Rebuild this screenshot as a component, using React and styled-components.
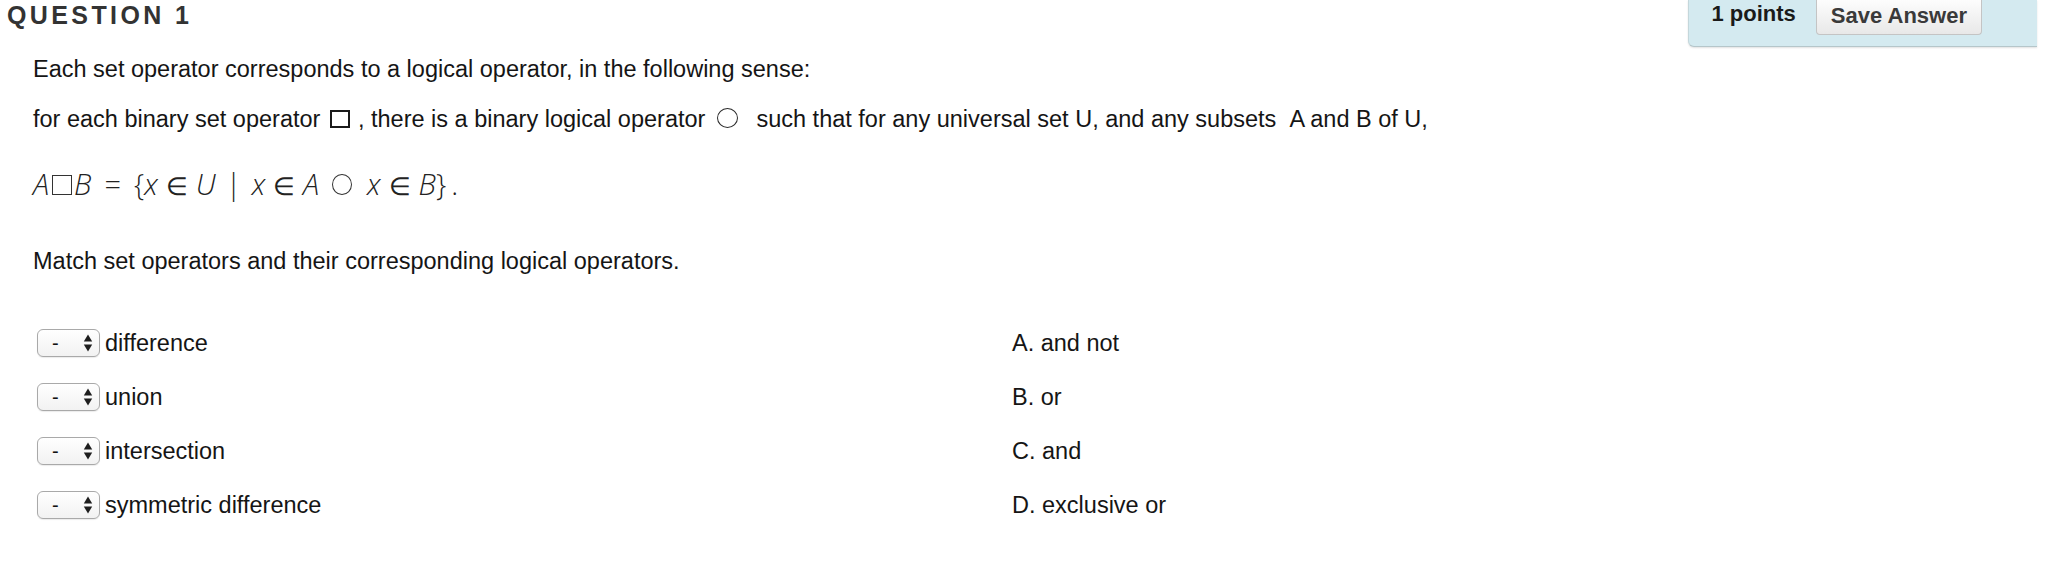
import React from "react";
import styled, { createGlobalStyle } from "styled-components";

const GlobalStyle = createGlobalStyle`
  html, body {
    margin: 0;
    padding: 0;
    background: #ffffff;
  }
  body {
    font-family: "Liberation Sans", Arial, Helvetica, sans-serif;
    color: #151515;
  }
`;

const Page = styled.div`
  width: 2046px;
  min-height: 566px;
  box-sizing: border-box;
`;

const Header = styled.header`
  display: flex;
  justify-content: space-between;
  align-items: flex-start;
`;

const Title = styled.h2`
  margin: 0;
  padding: 1px 0 0 7px;
  font-size: 25px;
  line-height: 28px;
  font-weight: 700;
  letter-spacing: 3.4px;
  color: #333333;
`;

const PointsBox = styled.div`
  display: flex;
  align-items: flex-start;
  height: 47px;
  box-sizing: border-box;
  margin-right: 9px;
  padding: 0 55px 0 23px;
  background: #d4eaf0;
  border-left: 1px solid #c4d7db;
  border-bottom: 1px solid #b5c6ca;
  border-bottom-left-radius: 6px;
  box-shadow: 0 1px 2px rgba(0, 0, 0, 0.12);
`;

const Points = styled.span`
  font-size: 22px;
  line-height: 26px;
  margin-top: 1px;
  font-weight: 700;
  color: #1a1a1a;
`;

const SaveButton = styled.button`
  margin-left: 20px;
  height: 35px;
  box-sizing: border-box;
  padding: 0 14px 3px;
  border: 1px solid #c4c4c4;
  border-top: none;
  border-radius: 0 0 4px 4px;
  background: linear-gradient(#fdfdfd, #e8e8e8);
  font-family: "Liberation Sans", Arial, sans-serif;
  font-size: 22px;
  line-height: 31px;
  font-weight: 700;
  color: #3a3a3a;
  cursor: pointer;
`;

const Content = styled.main`
  padding-left: 33px;
  margin-top: 8px;
`;

const Para = styled.p`
  margin: ${(p) => p.$top || 0}px 0 0 0;
  font-size: 23.5px;
  line-height: 28px;
  color: #151515;
  white-space: nowrap;
`;

const OpShape = styled.span`
  display: inline-block;
  box-sizing: border-box;
  width: ${(p) => p.$w}px;
  height: ${(p) => p.$h}px;
  margin: 0 ${(p) => p.$mr ?? 3}px 0 ${(p) => p.$ml ?? 3}px;
  border: ${(p) => p.$stroke}px solid ${(p) => p.$color || "#1a1a1a"};
  border-radius: ${(p) => (p.$shape === "circle" ? "50%" : "0")};
  vertical-align: ${(p) => p.$va ?? -1}px;
`;

const Formula = styled.div`
  margin-top: 31px;
  font-family: "Open Sans", "DejaVu Sans", sans-serif;
  font-weight: 300;
  font-size: 29px;
  line-height: 40px;
  color: #222222;
  white-space: nowrap;
`;

const Var = styled.i`
  font-style: italic;
  font-weight: 300;
`;

const Rel = styled.span`
  display: inline-block;
  margin: 0 ${(p) => p.$space ?? 0.3}em;
  font-family: ${(p) => (p.$sym ? '"DejaVu Sans", sans-serif' : '"Open Sans", sans-serif')};
  font-weight: ${(p) => (p.$sym ? 200 : 300)};
  font-size: ${(p) => (p.$sym ? "0.86em" : "1em")};
`;

const Fence = styled.span`
  padding-left: ${(p) => p.$pl ?? 0}px;
`;

const MatchGrid = styled.div`
  margin-top: 53px;
  display: grid;
  grid-template-columns: 979px auto;
  row-gap: 24px;
  align-items: center;
`;

const LeftCell = styled.div`
  display: flex;
  align-items: center;
  gap: 5px;
  padding-left: 4px;
  height: 30px;
`;

const Label = styled.span`
  font-size: 23.5px;
  line-height: 28px;
  color: #151515;
`;

const SelectWrap = styled.span`
  position: relative;
  display: inline-block;
  width: 63px;
  height: 28px;
`;

const Select = styled.select`
  appearance: none;
  -webkit-appearance: none;
  width: 63px;
  height: 28px;
  box-sizing: border-box;
  margin: 0;
  padding: 0 0 0 14px;
  border: 1px solid #a9a9a9;
  border-radius: 6px;
  background: linear-gradient(#ffffff, #f2f2f2);
  box-shadow: 0 1px 1px rgba(0, 0, 0, 0.08);
  font-family: "Liberation Sans", Arial, sans-serif;
  font-size: 20px;
  font-weight: 400;
  color: #111111;
  outline: none;
`;

const Arrows = styled.svg`
  position: absolute;
  right: 7px;
  top: 4px;
  pointer-events: none;
`;

const OptionText = styled.span`
  font-size: 23.5px;
  line-height: 28px;
  color: #151515;
`;

const rows = [
  { term: "difference", option: "A. and not" },
  { term: "union", option: "B. or" },
  { term: "intersection", option: "C. and" },
  { term: "symmetric difference", option: "D. exclusive or" },
];

function Dropdown() {
  return (
    <SelectWrap>
      <Select defaultValue="-">
        <option value="-">-</option>
        <option value="A">A</option>
        <option value="B">B</option>
        <option value="C">C</option>
        <option value="D">D</option>
      </Select>
      <Arrows width="10" height="20" viewBox="0 0 10 20">
        <polygon points="0.8,8.5 5,1.5 9.2,8.5" fill="#1e1e1e" />
        <polygon points="0.8,11.5 5,18.5 9.2,11.5" fill="#1e1e1e" />
      </Arrows>
    </SelectWrap>
  );
}

export default function App() {
  return (
    <Page>
      <GlobalStyle />
      <Header>
        <Title>QUESTION 1</Title>
        <PointsBox>
          <Points>1 points</Points>
          <SaveButton type="button">Save Answer</SaveButton>
        </PointsBox>
      </Header>
      <Content>
        <Para>Each set operator corresponds to a logical operator, in the following sense:</Para>
        <Para $top={22}>
          for each binary set operator
          <OpShape $shape="box" $w={20} $h={18} $stroke={2} $ml={10} $mr={1} />
          {" , there is a binary logical operator"}
          <OpShape $shape="circle" $w={21} $h={20} $stroke={1.6} $color="#2a2a2a" $ml={12} $mr={5} />
          {"\u00a0 such that for any universal set U, and any subsets \u00a0A and B of U,"}
        </Para>
        <Formula>
          <Var>A</Var>
          <OpShape $shape="box" $w={20} $h={20} $stroke={1.5} $color="#333" $ml={3} $mr={2} $va={0} />
          <Var>B</Var>
          <Rel $space={0.45}>=</Rel>
          <Fence>{"{"}</Fence>
          <Var>x</Var>
          <Rel $sym $space={0.32}>∈</Rel>
          <Var>U</Var>
          <Rel $space={0.35}>|</Rel>
          <Var>x</Var>
          <Rel $sym $space={0.32}>∈</Rel>
          <Var>A</Var>
          <OpShape $shape="circle" $w={20} $h={21} $stroke={1.5} $color="#333" $ml={13} $mr={15} $va={0} />
          <Var>x</Var>
          <Rel $sym $space={0.32}>∈</Rel>
          <Var>B</Var>
          <Fence>{"}"}</Fence>
          <Fence $pl={5}>.</Fence>
        </Formula>
        <Para $top={40}>Match set operators and their corresponding logical operators.</Para>
        <MatchGrid>
          {rows.map((r) => (
            <React.Fragment key={r.term}>
              <LeftCell>
                <Dropdown />
                <Label>{r.term}</Label>
              </LeftCell>
              <OptionText>{r.option}</OptionText>
            </React.Fragment>
          ))}
        </MatchGrid>
      </Content>
    </Page>
  );
}
